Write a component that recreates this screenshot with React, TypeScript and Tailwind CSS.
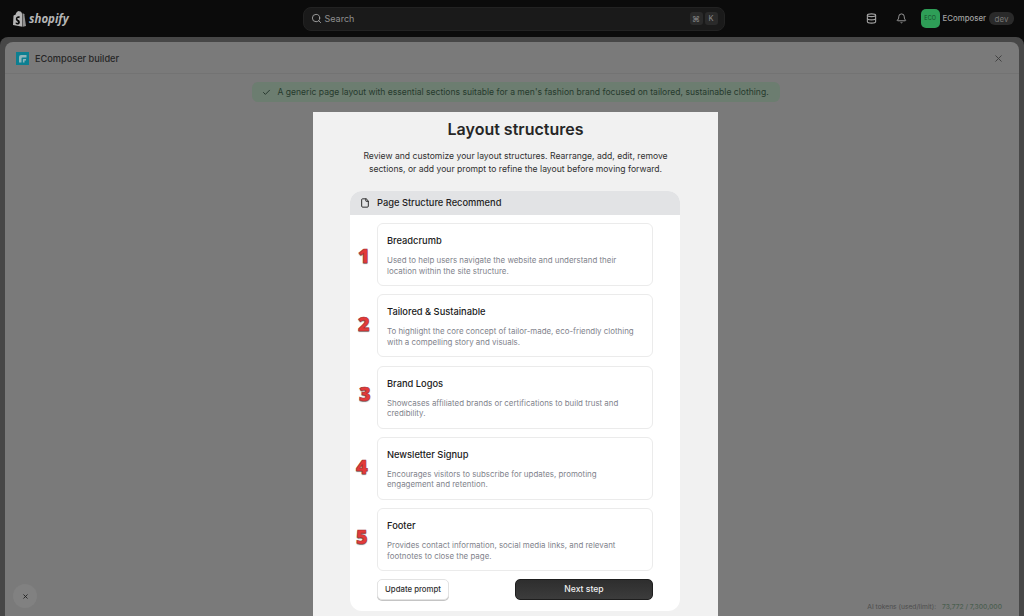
import { Bell, Check, Database, File, Search, X } from "lucide-react";

const sections = [
  {
    title: "Breadcrumb",
    text: "Used to help users navigate the website and understand their location within the site structure.",
    mark: "1",
    markClass: "left-[-20px] top-[20px]",
  },
  {
    title: "Tailored & Sustainable",
    text: "To highlight the core concept of tailor-made, eco-friendly clothing with a compelling story and visuals.",
    mark: "2",
    markClass: "left-[-20px] top-[17px]",
  },
  {
    title: "Brand Logos",
    text: "Showcases affiliated brands or certifications to build trust and credibility.",
    mark: "3",
    markClass: "left-[-19px] top-[15px]",
  },
  {
    title: "Newsletter Signup",
    text: "Encourages visitors to subscribe for updates, promoting engagement and retention.",
    mark: "4",
    markClass: "left-[-22px] top-[17px]",
  },
  {
    title: "Footer",
    text: "Provides contact information, social media links, and relevant footnotes to close the page.",
    mark: "5",
    markClass: "left-[-22px] top-[16px]",
  },
];

const TopBar = () => (
  <div className="h-[37px] shrink-0 bg-[#0b0b0b] flex items-center px-[10px]">
    <div className="flex-1 flex items-center gap-[3px] pl-[3px]">
      <svg width="13" height="16" viewBox="0 0 13 16">
        <path d="M9.6 2.2 8.9 2.4C8.5 1.2 7.9.6 7 .6 6.6.2 6.200 0 5.800 0 3.800 0 2.800 2.500 2.500 3.800L1.100 4.200C.7 4.400.6 4.400.5 4.800L0 13.900 9.400 15.700V2.300Z" fill="#b5b5b5" />
        <path d="M9.900 2.200 9.900 15.700 13 14.900 11.300 3.300C11.200 3 10.400 2.500 9.900 2.200Z" fill="#8f8f8f" />
        <path d="M6.800 5.600 6.300 7.200C5.200 6.700 4.200 7 4.300 7.800 4.400 8.800 6.900 9 6.900 11.200 6.900 13 5 14 3.500 13.300 3 13 2.500 12.600 2.500 12.600L2.900 11.300C3.700 12 4.800 12.200 5 11.300 5 10.200 3 10.100 2.800 8.200 2.700 6 4.900 4.800 6.800 5.600Z" fill="#0b0b0b" />
      </svg>
      <span className="font-['Open_Sans',sans-serif] text-[11.500px] font-bold italic text-[#b5b5b5]">shopify</span>
    </div>
    <div className="w-[422px] h-[24px] rounded-lg bg-[#1a1a1a] border border-[#222222] flex items-center pl-[7px] pr-[6px]">
      <Search size={11} color="#a3a3a3" />
      <span className="ml-[3px] text-[9px] text-[#8f8f8f]">Search</span>
      <div className="ml-auto flex gap-[2px]">
        <span className="w-[13px] h-[13px] rounded-[3px] bg-[#2a2a2a] flex items-center justify-center text-[8px] text-[#8a8a8a]">⌘</span>
        <span className="w-[13px] h-[13px] rounded-[3px] bg-[#2a2a2a] flex items-center justify-center text-[7.500px] text-[#8a8a8a]">K</span>
      </div>
    </div>
    <div className="flex-1 flex items-center justify-end">
      <Database size={11} color="#a3a3a3" strokeWidth={2.400} />
      <Bell size={11} color="#a3a3a3" className="ml-[19px]" />
      <span className="ml-[14px] w-[19px] h-[19px] rounded-[5px] bg-[#2e9e57] flex items-center justify-center text-[5.500px] text-[#174d2b]">ECO</span>
      <span className="ml-[3px] text-[7.800px] font-medium text-[#a3a3a3]">EComposer</span>
      <span className="ml-[3px] w-[25px] h-[13px] rounded-[6px] bg-[#2a2a2a] flex items-center justify-center text-[8px] text-[#777777]">dev</span>
    </div>
  </div>
);

const SectionCard = ({ title, text, mark, markClass }: (typeof sections)[number]) => (
  <div className="relative h-[63px] rounded-[6px] bg-white border border-[#ebebeb] pl-[9px] pr-[16px] pt-[11px]">
    <span
      className={`absolute ${markClass} font-['Open_Sans',sans-serif] text-[20px] leading-[24px] font-extrabold text-[#e33a3a] [-webkit-text-stroke:0.6px_#9c2f2f] [text-shadow:0_1px_1px_#8a8a8a]`}
    >
      {mark}
    </span>
    <h4 className="text-[9.300px] leading-[12px] font-medium text-[#1a1a1a]">{title}</h4>
    <p className="mt-[8px] text-[7.920px] leading-[10.500px] text-[#7f838c]">{text}</p>
  </div>
);

const App = () => {
  return (
    <div className="relative w-[1024px] h-[616px] overflow-hidden flex flex-col bg-[#0b0b0b] font-['Inter',sans-serif]">
      <TopBar />
      <div className="flex-1 min-h-0 bg-[#474747] rounded-t-[8px] px-[5px] pt-[5px]">
        <div className="h-full rounded-t-[8px] bg-[#7a7a7a] flex flex-col">
          <div className="h-[32px] shrink-0 border-b border-[#737373] pt-[2px] flex items-center justify-between pl-[11px] pr-[15px]">
            <div className="flex items-center gap-[6px]">
              <svg width="13" height="13" viewBox="0 0 13 13">
                <rect width="13" height="13" fill="#0c7f91" />
                <path d="M10.500 3H5a2 2 0 0 0-2 2v5.500h2.500V6.500a1 1 0 0 1 1-1h4Z" fill="#8fb5bb" />
                <path d="M10 7H7.500a.6.6 0 0 0-.6.6V10.500H8.500V8.500H10Z" fill="#8fb5bb" />
              </svg>
              <span className="text-[9.200px] font-medium text-[#262626]">EComposer builder</span>
            </div>
            <X size={11} color="#3d3d3d" />
          </div>
          <div className="flex-1 min-h-0 pl-[7px] flex flex-col items-center">
            <div className="mt-[8px] w-[528px] h-[20px] pl-[10px] rounded-[6px] bg-[#6c7d70] flex items-center gap-[7px] text-[8.570px] text-[#263a2d]">
              <Check size={9} color="#22332a" strokeWidth={2.500} />
              <span>A generic page layout with essential sections suitable for a men's fashion brand focused on tailored, sustainable clothing.</span>
            </div>
            <div className="mt-[10px] w-[405px] flex-1 min-h-0 bg-[#f1f1f1] flex flex-col items-center pt-[7px]">
              <h2 className="text-[16px] leading-[20px] font-semibold text-[#262626]">Layout structures</h2>
              <p className="mt-[11px] w-[320px] text-center text-[8.600px] leading-[13px] text-[#303030]">
                Review and customize your layout structures. Rearrange, add, edit, remove sections, or add your prompt to refine the layout before moving forward.
              </p>
              <div className="mt-[15px] ml-[37px] self-start w-[330px] h-[420px] shrink-0 rounded-[12px] bg-white overflow-hidden flex flex-col">
                <div className="h-[24px] shrink-0 bg-[#e2e3e5] flex items-center gap-[7px] pl-[10px]">
                  <File size={10} color="#1f1f1f" strokeWidth={2.200} />
                  <span className="text-[9.300px] font-medium text-[#1f1f1f]">Page Structure Recommend</span>
                </div>
                <div className="mt-[8px] px-[27px] flex flex-col gap-[8.250px]">
                  {sections.map((s) => (
                    <SectionCard key={s.title} {...s} />
                  ))}
                </div>
                <div className="mt-[8px] px-[27px] flex items-center justify-between">
                  <button className="w-[72px] h-[21px] rounded-[5px] bg-white border border-[#e3e3e3] shadow-[0_1px_0_#c4c4c4] text-[7.800px] font-medium text-[#303030]">
                    Update prompt
                  </button>
                  <button className="w-[138px] h-[21px] rounded-[5px] bg-linear-to-b from-[#2e2e2e] to-[#3c3c3c] border border-[#1e1e1e] text-[8.600px] font-medium text-[#f1f1f1]">
                    Next step
                  </button>
                </div>
              </div>
            </div>
          </div>
        </div>
      </div>
      <button className="absolute left-[13px] top-[584px] w-[24px] h-[24px] rounded-full bg-[#818181] flex items-center justify-center">
        <X size={7} color="#1f1f1f" strokeWidth={3} />
      </button>
      <div className="absolute right-[22px] top-[602px] flex gap-[6px] text-[6.700px] leading-[10px]">
        <span className="text-[#4d4d4d]">AI tokens (used/limit):</span>
        <span className="font-medium text-[#4b5f50]">73,772 / 7,300,000</span>
      </div>
    </div>
  );
};

export default App;
